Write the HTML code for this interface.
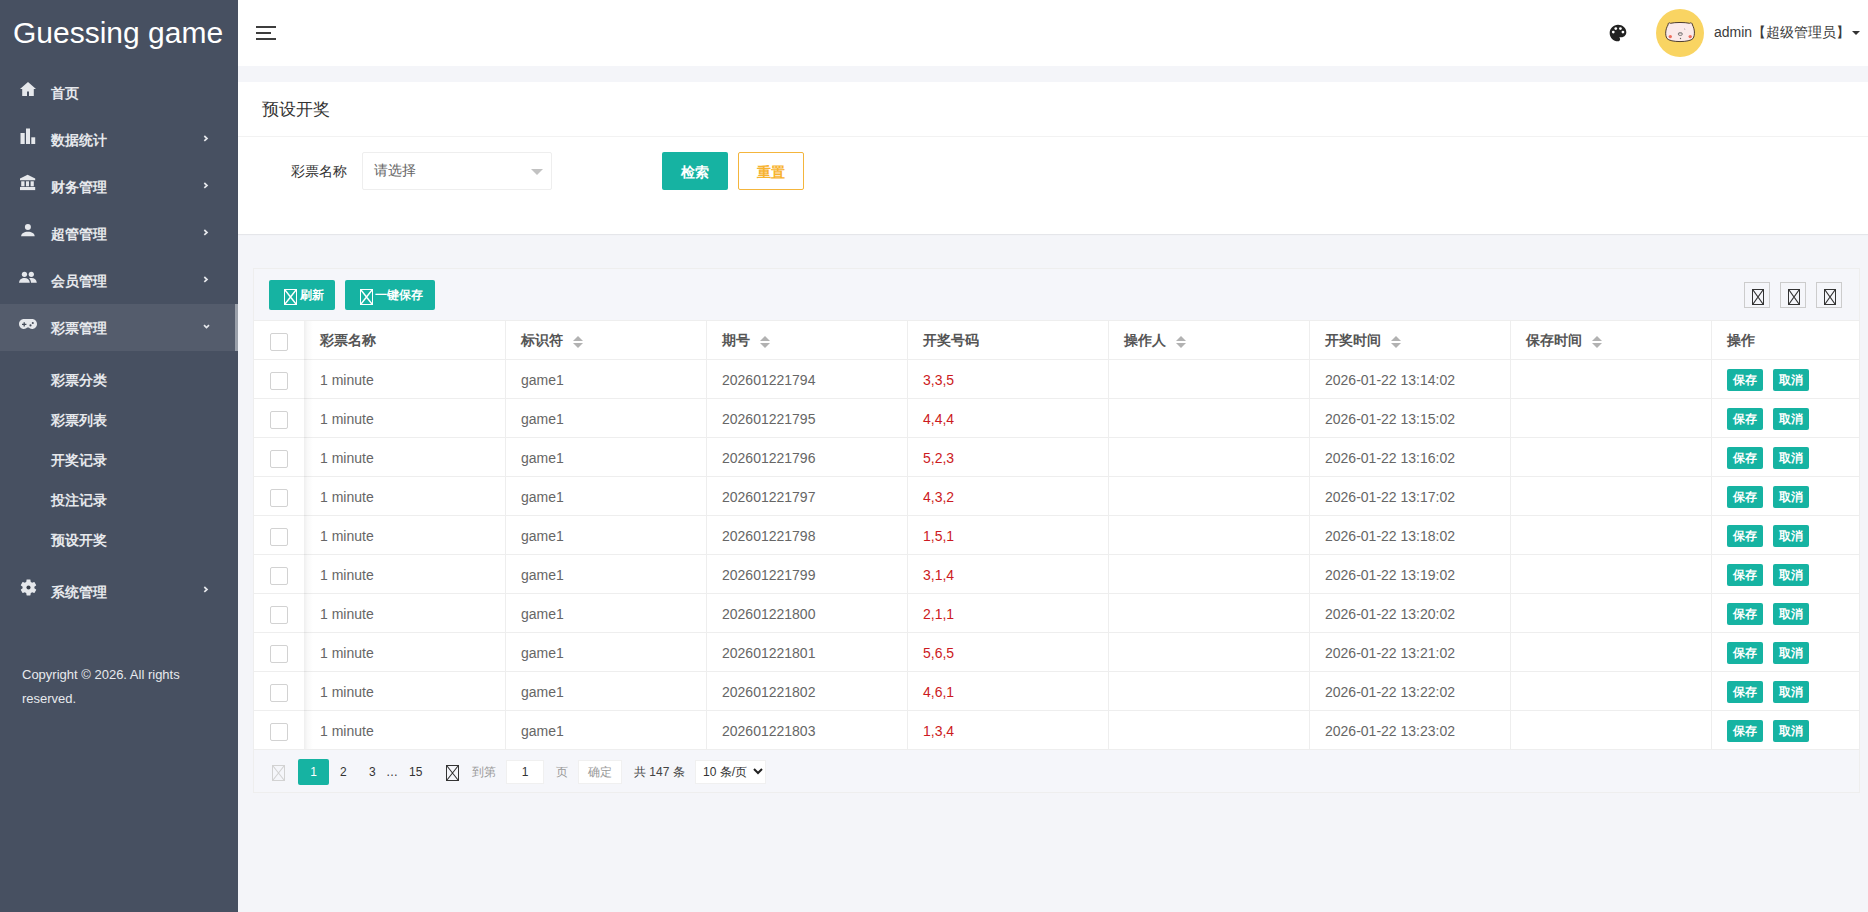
<!DOCTYPE html><html><head><meta charset="utf-8"><style>
*{box-sizing:border-box;margin:0;padding:0}
html,body{width:1868px;height:912px;overflow:hidden}
body{position:relative;background:#f4f5f9;font-family:"Liberation Sans",sans-serif;font-size:14px;color:#333}
.a{position:absolute}
#side{left:0;top:0;width:238px;height:912px;background:#475061}
#logo{left:13px;top:13px;font-size:30px;line-height:40px;color:#fff;white-space:nowrap}
.mi{position:absolute;left:0;width:238px;height:47px;color:#e6e8ec;font-weight:bold}
.mi .t{position:absolute;left:51px;top:1px;line-height:47px;font-size:14px}
.mi svg.ic{position:absolute}
.mi svg.ar{position:absolute;left:203px}
.mi.act{background:#545c6c}
.mi.act:after{content:"";position:absolute;right:0;top:0;width:3px;height:47px;background:#9aa0aa}
.si{position:absolute;left:51px;height:40px;line-height:40px;color:#e6e8ec;font-weight:bold}
#copy{left:22px;top:663px;width:210px;color:#e8eaee;font-size:13px;line-height:24px}
#hdr{left:238px;top:0;width:1630px;height:66px;background:#fff}
#card{left:238px;top:82px;width:1630px;height:152px;background:#fff;box-shadow:0 1px 1px rgba(0,0,0,.06)}
#card .ttl{position:absolute;left:24px;top:0px;height:54px;line-height:54px;font-size:16.5px;color:#333;font-weight:500}
#card .bd{position:absolute;left:0;top:54px;width:100%;height:1px;background:#f2f2f2}
.lbl{left:291px;top:152px;line-height:38px;color:#333}
.sel{left:362px;top:152px;width:190px;height:38px;border:1px solid #eee;border-radius:2px;background:#fff}
.sel .ph{position:absolute;left:11px;top:-1px;line-height:36px;color:#666}
.sel .tri{position:absolute;left:168px;top:16px;width:0;height:0;border-left:6px solid transparent;border-right:6px solid transparent;border-top:6px solid #c2c2c2}
.btn{position:absolute;height:38px;line-height:40px;text-align:center;border-radius:2px;font-weight:bold;font-size:14px}
.g{background:#16b3a2;color:#fff}
.o{background:#fff;border:1px solid #f4b53c;color:#f7b32e;line-height:38px}
#tbl{left:253px;top:268px;width:1607px;height:525px;border:1px solid #eee;background:#f5f6fa}
.bsm{position:absolute;top:280px;height:30px;line-height:30px;border-radius:2px;background:#16b3a2;color:#fff;font-size:12px;font-weight:bold}
.bsm svg{position:absolute;top:9px}
.bsm span{position:absolute;top:0}
.tsf{position:absolute;top:282px;width:26px;height:26px;border:1px solid #ccc}
.tsf svg{position:absolute;left:7px;top:6px}
.hl{position:absolute;left:254px;width:1605px;height:1px;background:#eee}
.vl{position:absolute;width:1px;background:#eee}
.rowbg{position:absolute;left:254px;width:1605px;background:#fff}
.th{position:absolute;font-weight:bold;color:#555;line-height:38px;white-space:nowrap}
.td{position:absolute;color:#666;line-height:40px;white-space:nowrap}
.red{color:#cc1a22}
.cb{position:absolute;left:270px;width:18px;height:18px;border:1px solid #d2d2d2;border-radius:2px;background:#fff}
.bxs{position:absolute;width:36px;height:22px;line-height:23px;text-align:center;border-radius:2px;background:#16b3a2;color:#fff;font-size:12px;font-weight:bold}
.sort{position:absolute;width:10px;height:12px}.sort svg{display:block}
.pg{position:absolute;font-size:12px;line-height:26px;top:759px;color:#333}
</style></head><body>
<div id="side" class="a"><div id="logo" class="a">Guessing game</div>
<div class="mi" style="top:69px"><svg class="ic" width="16" height="14" viewBox="0 0 16 14" style="left:20px;top:13px"><path d="M8 0L0 7h2.2v7h4.8V9.5h2V14h4.8V7H16z" fill="#e6e8ec"/></svg><span class="t">首页</span></div>
<div class="mi" style="top:116px"><svg class="ic" width="16" height="16" viewBox="0 0 16 16" style="left:20px;top:12px"><rect x="0.5" y="5" width="4.2" height="11" fill="#e6e8ec"/><rect x="6" y="0.5" width="4" height="15.5" fill="#e6e8ec"/><rect x="11.3" y="9.3" width="3.9" height="6.7" fill="#e6e8ec"/></svg><span class="t">数据统计</span><svg class="ar" width="6" height="7" viewBox="0 0 6 7" style="top:19px;left:203px"><path d="M1.3 1L4 3.4L1.3 5.8" stroke="#e6e8ec" stroke-width="1.7" fill="none"/></svg></div>
<div class="mi" style="top:163px"><svg class="ic" width="16" height="17" viewBox="0 0 16 17" style="left:20px;top:11px"><path d="M7.6 0.7L0 4.6V6.3H15.2V4.6z" fill="#e6e8ec"/><rect x="1.2" y="7.3" width="3.3" height="5" fill="#e6e8ec"/><rect x="6" y="7.3" width="3" height="5" fill="#e6e8ec"/><rect x="10.6" y="7.3" width="3.2" height="5" fill="#e6e8ec"/><rect x="0" y="13" width="15.2" height="3.1" fill="#e6e8ec"/></svg><span class="t">财务管理</span><svg class="ar" width="6" height="7" viewBox="0 0 6 7" style="top:19px;left:203px"><path d="M1.3 1L4 3.4L1.3 5.8" stroke="#e6e8ec" stroke-width="1.7" fill="none"/></svg></div>
<div class="mi" style="top:210px"><svg class="ic" width="14" height="14" viewBox="0 0 14 14" style="left:21px;top:13px"><circle cx="6.9" cy="3.9" r="3" fill="#e6e8ec"/><path d="M0.1 13.3C0.3 10.3 3 8.7 6.9 8.7S13.5 10.3 13.7 13.3z" fill="#e6e8ec"/></svg><span class="t">超管管理</span><svg class="ar" width="6" height="7" viewBox="0 0 6 7" style="top:19px;left:203px"><path d="M1.3 1L4 3.4L1.3 5.8" stroke="#e6e8ec" stroke-width="1.7" fill="none"/></svg></div>
<div class="mi" style="top:257px"><svg class="ic" width="18" height="12" viewBox="0 0 18 12" style="left:19px;top:14px"><circle cx="5.45" cy="3.3" r="2.6" fill="#e6e8ec"/><circle cx="12.3" cy="3.3" r="2.6" fill="#e6e8ec"/><path d="M0 11.8C0.2 8.5 2.5 7 5.5 7S10.6 8.5 10.8 11.8z" fill="#e6e8ec"/><path d="M10 7.3C10.7 7.1 11.5 7 12.5 7C15.5 7 17.6 8.5 17.8 11.8H12C11.8 9.8 11.2 8.2 10 7.3z" fill="#e6e8ec"/></svg><span class="t">会员管理</span><svg class="ar" width="6" height="7" viewBox="0 0 6 7" style="top:19px;left:203px"><path d="M1.3 1L4 3.4L1.3 5.8" stroke="#e6e8ec" stroke-width="1.7" fill="none"/></svg></div>
<div class="mi act" style="top:304px"><svg class="ic" width="18" height="10" viewBox="0 0 18 10" style="left:19px;top:15px"><path d="M5 0H13C15.8 0 18 2.2 18 5C18 7.8 15.8 10 13 10C11.6 10 10.6 9.4 9.8 8.6H8.2C7.4 9.4 6.4 10 5 10C2.2 10 0 7.8 0 5C0 2.2 2.2 0 5 0z" fill="#e6e8ec"/><path d="M3 5.4H7.4M5.2 3.3V7.5" stroke="#454c5a" stroke-width="1.3"/><circle cx="13.8" cy="4" r="1.05" fill="#454c5a"/><circle cx="11.5" cy="6.4" r="1.05" fill="#454c5a"/></svg><span class="t">彩票管理</span><svg class="ar" width="8" height="6" viewBox="0 0 8 6" style="top:20px;left:203px"><path d="M1 1.2L3.5 3.6L6 1.2" stroke="#e6e8ec" stroke-width="1.7" fill="none"/></svg></div>
<div class="si" style="top:360px">彩票分类</div>
<div class="si" style="top:400px">彩票列表</div>
<div class="si" style="top:440px">开奖记录</div>
<div class="si" style="top:480px">投注记录</div>
<div class="si" style="top:520px">预设开奖</div>
<div class="mi" style="top:568px"><svg class="ic" width="19" height="19" viewBox="0 0 24 24" style="left:18.5px;top:10px"><path fill="#e6e8ec" d="M19.4 13c.04-.33.06-.66.06-1s-.02-.67-.06-1l2.1-1.65c.19-.15.24-.42.12-.64l-2-3.46c-.12-.22-.39-.3-.61-.22l-2.49 1c-.52-.4-1.08-.73-1.69-.98l-.38-2.65C14.46 2.18 14.25 2 14 2h-4c-.25 0-.46.18-.49.42l-.38 2.65c-.61.25-1.17.59-1.69.98l-2.49-1c-.23-.09-.49 0-.61.22l-2 3.46c-.13.22-.07.49.12.64L4.57 11c-.04.33-.07.67-.07 1s.03.67.07 1l-2.11 1.65c-.19.15-.24.42-.12.64l2 3.46c.12.22.39.3.61.22l2.49-1c.52.4 1.08.73 1.69.98l.38 2.65c.03.24.24.42.49.42h4c.25 0 .46-.18.49-.42l.38-2.65c.61-.25 1.17-.59 1.69-.98l2.49 1c.23.09.49 0 .61-.22l2-3.46c.12-.22.07-.49-.12-.64L19.4 13z"/><circle cx="12" cy="12" r="2.6" fill="#3a404c"/></svg><span class="t">系统管理</span><svg class="ar" width="6" height="7" viewBox="0 0 6 7" style="top:18px;left:203px"><path d="M1.3 1L4 3.4L1.3 5.8" stroke="#e6e8ec" stroke-width="1.7" fill="none"/></svg></div>
<div id="copy" class="a">Copyright © 2026. All rights reserved.</div>
</div>
<div id="hdr" class="a"></div>
<svg class="a" style="left:256px;top:25px" width="20" height="16" viewBox="0 0 20 16"><rect x="0" y="1" width="20" height="2" fill="#3d3d3d"/><rect x="0" y="7" width="15" height="2" fill="#3d3d3d"/><rect x="0" y="13" width="20" height="2" fill="#3d3d3d"/></svg>
<svg class="a" style="left:1608px;top:23px" width="20" height="20" viewBox="0 0 24 24"><path fill="#222" d="M12 2C6.49 2 2 6.49 2 12s4.49 10 10 10c1.38 0 2.5-1.12 2.5-2.5 0-.61-.23-1.2-.64-1.67-.08-.1-.13-.21-.13-.33 0-.28.22-.5.5-.5H16c3.31 0 6-2.69 6-6 0-4.96-4.49-9-10-9z"/><circle cx="9.3" cy="6.7" r="1.65" fill="#fff"/><circle cx="14.9" cy="6.7" r="1.65" fill="#fff"/><circle cx="6.3" cy="10.9" r="1.65" fill="#fff"/><circle cx="17.9" cy="10.9" r="1.65" fill="#fff"/></svg>
<svg class="a" style="left:1656px;top:9px" width="48" height="48" viewBox="0 0 48 48"><circle cx="24" cy="24" r="24" fill="#f9d462"/><path d="M12 16C12 14 13 13.3 14.5 14.3C19 13.2 29 13.2 33.5 14.3C35 13.3 36.3 14 36.5 16C38.7 20 39.2 26 37 29.5C34 33.6 14 33.6 11 29.5C8.8 26 9.5 20 12 16z" fill="#fbeaea" stroke="#3a2a20" stroke-width="0.9"/><circle cx="14.3" cy="27.6" r="1.7" fill="#ef6f5e"/><circle cx="34.2" cy="27.6" r="1.7" fill="#ef6f5e"/><ellipse cx="24.3" cy="25" rx="2.1" ry="1.5" fill="none" stroke="#555" stroke-width="0.7"/><path d="M22.5 24.6H26" stroke="#777" stroke-width="0.5"/><circle cx="24.5" cy="29.5" r="0.7" fill="#666"/><path d="M28.5 19.5l0.4 1.3" stroke="#666" stroke-width="0.5"/></svg>
<div class="a" style="left:1714px;top:23px;line-height:18px;color:#3c3c3c;white-space:nowrap">admin【超级管理员】</div>
<div class="a" style="left:1852px;top:31px;width:0;height:0;border-left:4px solid transparent;border-right:4px solid transparent;border-top:4px solid #333"></div>
<div id="card" class="a"><div class="ttl">预设开奖</div><div class="bd"></div></div>
<div class="a lbl">彩票名称</div>
<div class="a sel"><span class="ph">请选择</span><i class="tri"></i></div>
<div class="btn g" style="left:662px;top:152px;width:66px">检索</div>
<div class="btn o" style="left:738px;top:152px;width:66px">重置</div>
<div id="tbl" class="a"></div>
<div class="bsm" style="left:269px;width:66px"><svg style="left:15px" width="13" height="16" viewBox="0 0 13 16"><rect x="0.5" y="0.5" width="12" height="15" fill="none" stroke="#fff" stroke-width="1"/><path d="M1 1L12 15M12 1L1 15" stroke="#fff" stroke-width="1.4"/></svg><span style="left:31px">刷新</span></div>
<div class="bsm" style="left:345px;width:90px"><svg style="left:15px" width="13" height="16" viewBox="0 0 13 16"><rect x="0.5" y="0.5" width="12" height="15" fill="none" stroke="#fff" stroke-width="1"/><path d="M1 1L12 15M12 1L1 15" stroke="#fff" stroke-width="1.4"/></svg><span style="left:30px">一键保存</span></div>
<div class="tsf" style="left:1744px"><svg width="12" height="16" viewBox="0 0 12 16"><rect x="0.5" y="0.5" width="11" height="15" fill="none" stroke="#333" stroke-width="1"/><path d="M1 1L11 15M11 1L1 15" stroke="#333" stroke-width="1.2"/></svg></div>
<div class="tsf" style="left:1780px"><svg width="12" height="16" viewBox="0 0 12 16"><rect x="0.5" y="0.5" width="11" height="15" fill="none" stroke="#333" stroke-width="1"/><path d="M1 1L11 15M11 1L1 15" stroke="#333" stroke-width="1.2"/></svg></div>
<div class="tsf" style="left:1816px"><svg width="12" height="16" viewBox="0 0 12 16"><rect x="0.5" y="0.5" width="11" height="15" fill="none" stroke="#333" stroke-width="1"/><path d="M1 1L11 15M11 1L1 15" stroke="#333" stroke-width="1.2"/></svg></div>
<div class="rowbg" style="top:320px;height:430px"></div>
<div class="hl" style="top:320px"></div>
<div class="hl" style="top:359px"></div>
<div class="hl" style="top:398px"></div>
<div class="hl" style="top:437px"></div>
<div class="hl" style="top:476px"></div>
<div class="hl" style="top:515px"></div>
<div class="hl" style="top:554px"></div>
<div class="hl" style="top:593px"></div>
<div class="hl" style="top:632px"></div>
<div class="hl" style="top:671px"></div>
<div class="hl" style="top:710px"></div>
<div class="hl" style="top:749px"></div>
<div class="vl" style="left:505px;top:321px;height:429px"></div>
<div class="vl" style="left:706px;top:321px;height:429px"></div>
<div class="vl" style="left:907px;top:321px;height:429px"></div>
<div class="vl" style="left:1108px;top:321px;height:429px"></div>
<div class="vl" style="left:1309px;top:321px;height:429px"></div>
<div class="vl" style="left:1510px;top:321px;height:429px"></div>
<div class="vl" style="left:1711px;top:321px;height:429px"></div>
<div class="a" style="left:304px;top:321px;width:9px;height:428px;background:linear-gradient(to right,rgba(0,0,0,.065),rgba(0,0,0,.025) 40%,rgba(0,0,0,0))"></div>
<div class="th" style="left:320px;top:321px">彩票名称</div>
<div class="th" style="left:521px;top:321px">标识符</div>
<div class="sort" style="left:573px;top:336px"><svg width="10" height="12" viewBox="0 0 10 12"><path d="M5 0L10 5H0z" fill="#b2b2b2"/><path d="M0 7H10L5 12z" fill="#b2b2b2"/></svg></div>
<div class="th" style="left:722px;top:321px">期号</div>
<div class="sort" style="left:760px;top:336px"><svg width="10" height="12" viewBox="0 0 10 12"><path d="M5 0L10 5H0z" fill="#b2b2b2"/><path d="M0 7H10L5 12z" fill="#b2b2b2"/></svg></div>
<div class="th" style="left:923px;top:321px">开奖号码</div>
<div class="th" style="left:1124px;top:321px">操作人</div>
<div class="sort" style="left:1176px;top:336px"><svg width="10" height="12" viewBox="0 0 10 12"><path d="M5 0L10 5H0z" fill="#b2b2b2"/><path d="M0 7H10L5 12z" fill="#b2b2b2"/></svg></div>
<div class="th" style="left:1325px;top:321px">开奖时间</div>
<div class="sort" style="left:1391px;top:336px"><svg width="10" height="12" viewBox="0 0 10 12"><path d="M5 0L10 5H0z" fill="#b2b2b2"/><path d="M0 7H10L5 12z" fill="#b2b2b2"/></svg></div>
<div class="th" style="left:1526px;top:321px">保存时间</div>
<div class="sort" style="left:1592px;top:336px"><svg width="10" height="12" viewBox="0 0 10 12"><path d="M5 0L10 5H0z" fill="#b2b2b2"/><path d="M0 7H10L5 12z" fill="#b2b2b2"/></svg></div>
<div class="th" style="left:1727px;top:321px">操作</div>
<div class="cb" style="top:333px"></div>
<div class="cb" style="top:372px"></div>
<div class="td" style="left:320px;top:360px">1 minute</div>
<div class="td" style="left:521px;top:360px">game1</div>
<div class="td" style="left:722px;top:360px">202601221794</div>
<div class="td red" style="left:923px;top:360px">3,3,5</div>
<div class="td" style="left:1325px;top:360px">2026-01-22 13:14:02</div>
<div class="bxs" style="left:1727px;top:369px">保存</div>
<div class="bxs" style="left:1773px;top:369px">取消</div>
<div class="cb" style="top:411px"></div>
<div class="td" style="left:320px;top:399px">1 minute</div>
<div class="td" style="left:521px;top:399px">game1</div>
<div class="td" style="left:722px;top:399px">202601221795</div>
<div class="td red" style="left:923px;top:399px">4,4,4</div>
<div class="td" style="left:1325px;top:399px">2026-01-22 13:15:02</div>
<div class="bxs" style="left:1727px;top:408px">保存</div>
<div class="bxs" style="left:1773px;top:408px">取消</div>
<div class="cb" style="top:450px"></div>
<div class="td" style="left:320px;top:438px">1 minute</div>
<div class="td" style="left:521px;top:438px">game1</div>
<div class="td" style="left:722px;top:438px">202601221796</div>
<div class="td red" style="left:923px;top:438px">5,2,3</div>
<div class="td" style="left:1325px;top:438px">2026-01-22 13:16:02</div>
<div class="bxs" style="left:1727px;top:447px">保存</div>
<div class="bxs" style="left:1773px;top:447px">取消</div>
<div class="cb" style="top:489px"></div>
<div class="td" style="left:320px;top:477px">1 minute</div>
<div class="td" style="left:521px;top:477px">game1</div>
<div class="td" style="left:722px;top:477px">202601221797</div>
<div class="td red" style="left:923px;top:477px">4,3,2</div>
<div class="td" style="left:1325px;top:477px">2026-01-22 13:17:02</div>
<div class="bxs" style="left:1727px;top:486px">保存</div>
<div class="bxs" style="left:1773px;top:486px">取消</div>
<div class="cb" style="top:528px"></div>
<div class="td" style="left:320px;top:516px">1 minute</div>
<div class="td" style="left:521px;top:516px">game1</div>
<div class="td" style="left:722px;top:516px">202601221798</div>
<div class="td red" style="left:923px;top:516px">1,5,1</div>
<div class="td" style="left:1325px;top:516px">2026-01-22 13:18:02</div>
<div class="bxs" style="left:1727px;top:525px">保存</div>
<div class="bxs" style="left:1773px;top:525px">取消</div>
<div class="cb" style="top:567px"></div>
<div class="td" style="left:320px;top:555px">1 minute</div>
<div class="td" style="left:521px;top:555px">game1</div>
<div class="td" style="left:722px;top:555px">202601221799</div>
<div class="td red" style="left:923px;top:555px">3,1,4</div>
<div class="td" style="left:1325px;top:555px">2026-01-22 13:19:02</div>
<div class="bxs" style="left:1727px;top:564px">保存</div>
<div class="bxs" style="left:1773px;top:564px">取消</div>
<div class="cb" style="top:606px"></div>
<div class="td" style="left:320px;top:594px">1 minute</div>
<div class="td" style="left:521px;top:594px">game1</div>
<div class="td" style="left:722px;top:594px">202601221800</div>
<div class="td red" style="left:923px;top:594px">2,1,1</div>
<div class="td" style="left:1325px;top:594px">2026-01-22 13:20:02</div>
<div class="bxs" style="left:1727px;top:603px">保存</div>
<div class="bxs" style="left:1773px;top:603px">取消</div>
<div class="cb" style="top:645px"></div>
<div class="td" style="left:320px;top:633px">1 minute</div>
<div class="td" style="left:521px;top:633px">game1</div>
<div class="td" style="left:722px;top:633px">202601221801</div>
<div class="td red" style="left:923px;top:633px">5,6,5</div>
<div class="td" style="left:1325px;top:633px">2026-01-22 13:21:02</div>
<div class="bxs" style="left:1727px;top:642px">保存</div>
<div class="bxs" style="left:1773px;top:642px">取消</div>
<div class="cb" style="top:684px"></div>
<div class="td" style="left:320px;top:672px">1 minute</div>
<div class="td" style="left:521px;top:672px">game1</div>
<div class="td" style="left:722px;top:672px">202601221802</div>
<div class="td red" style="left:923px;top:672px">4,6,1</div>
<div class="td" style="left:1325px;top:672px">2026-01-22 13:22:02</div>
<div class="bxs" style="left:1727px;top:681px">保存</div>
<div class="bxs" style="left:1773px;top:681px">取消</div>
<div class="cb" style="top:723px"></div>
<div class="td" style="left:320px;top:711px">1 minute</div>
<div class="td" style="left:521px;top:711px">game1</div>
<div class="td" style="left:722px;top:711px">202601221803</div>
<div class="td red" style="left:923px;top:711px">1,3,4</div>
<div class="td" style="left:1325px;top:711px">2026-01-22 13:23:02</div>
<div class="bxs" style="left:1727px;top:720px">保存</div>
<div class="bxs" style="left:1773px;top:720px">取消</div>
<div class="a" style="left:272px;top:765px"><svg width="13" height="16" viewBox="0 0 13 16"><rect x="0.5" y="0.5" width="12" height="15" fill="none" stroke="#d2d2d2" stroke-width="1"/><path d="M1 1L12 15M12 1L1 15" stroke="#d2d2d2" stroke-width="1.1"/></svg></div>
<div class="a" style="left:298px;top:759px;width:31px;height:26px;border-radius:2px;background:#16b3a2"></div>
<div class="pg" style="left:298px;width:31px;text-align:center;color:#fff">1</div>
<div class="pg" style="left:340px">2</div>
<div class="pg" style="left:369px">3</div>
<div class="pg" style="left:386px">…</div>
<div class="pg" style="left:409px">15</div>
<div class="a" style="left:446px;top:765px"><svg width="13" height="16" viewBox="0 0 13 16"><rect x="0.5" y="0.5" width="12" height="15" fill="none" stroke="#333" stroke-width="1"/><path d="M1 1L12 15M12 1L1 15" stroke="#333" stroke-width="1.1"/></svg></div>
<div class="pg" style="left:472px;color:#999">到第</div>
<div class="a" style="left:506px;top:760px;width:38px;height:24px;background:#fff;border:1px solid #f0f0f0"></div>
<div class="pg" style="left:506px;width:38px;text-align:center;top:759px">1</div>
<div class="pg" style="left:556px;color:#999">页</div>
<div class="a" style="left:578px;top:760px;width:44px;height:24px;background:#fff;border:1px solid #f0f0f0"></div>
<div class="pg" style="left:578px;width:44px;text-align:center;color:#999">确定</div>
<div class="pg" style="left:634px;color:#444">共 147 条</div>
<div class="a" style="left:695px;top:760px;width:71px;height:24px;background:#fff;border:1px solid #f0f0f0"></div>
<div class="pg" style="left:703px">10 条/页</div>
<svg class="a" style="left:753px;top:768px" width="10" height="7" viewBox="0 0 10 7"><path d="M1 1L5 5L9 1" stroke="#222" stroke-width="2" fill="none"/></svg>
</body></html>
